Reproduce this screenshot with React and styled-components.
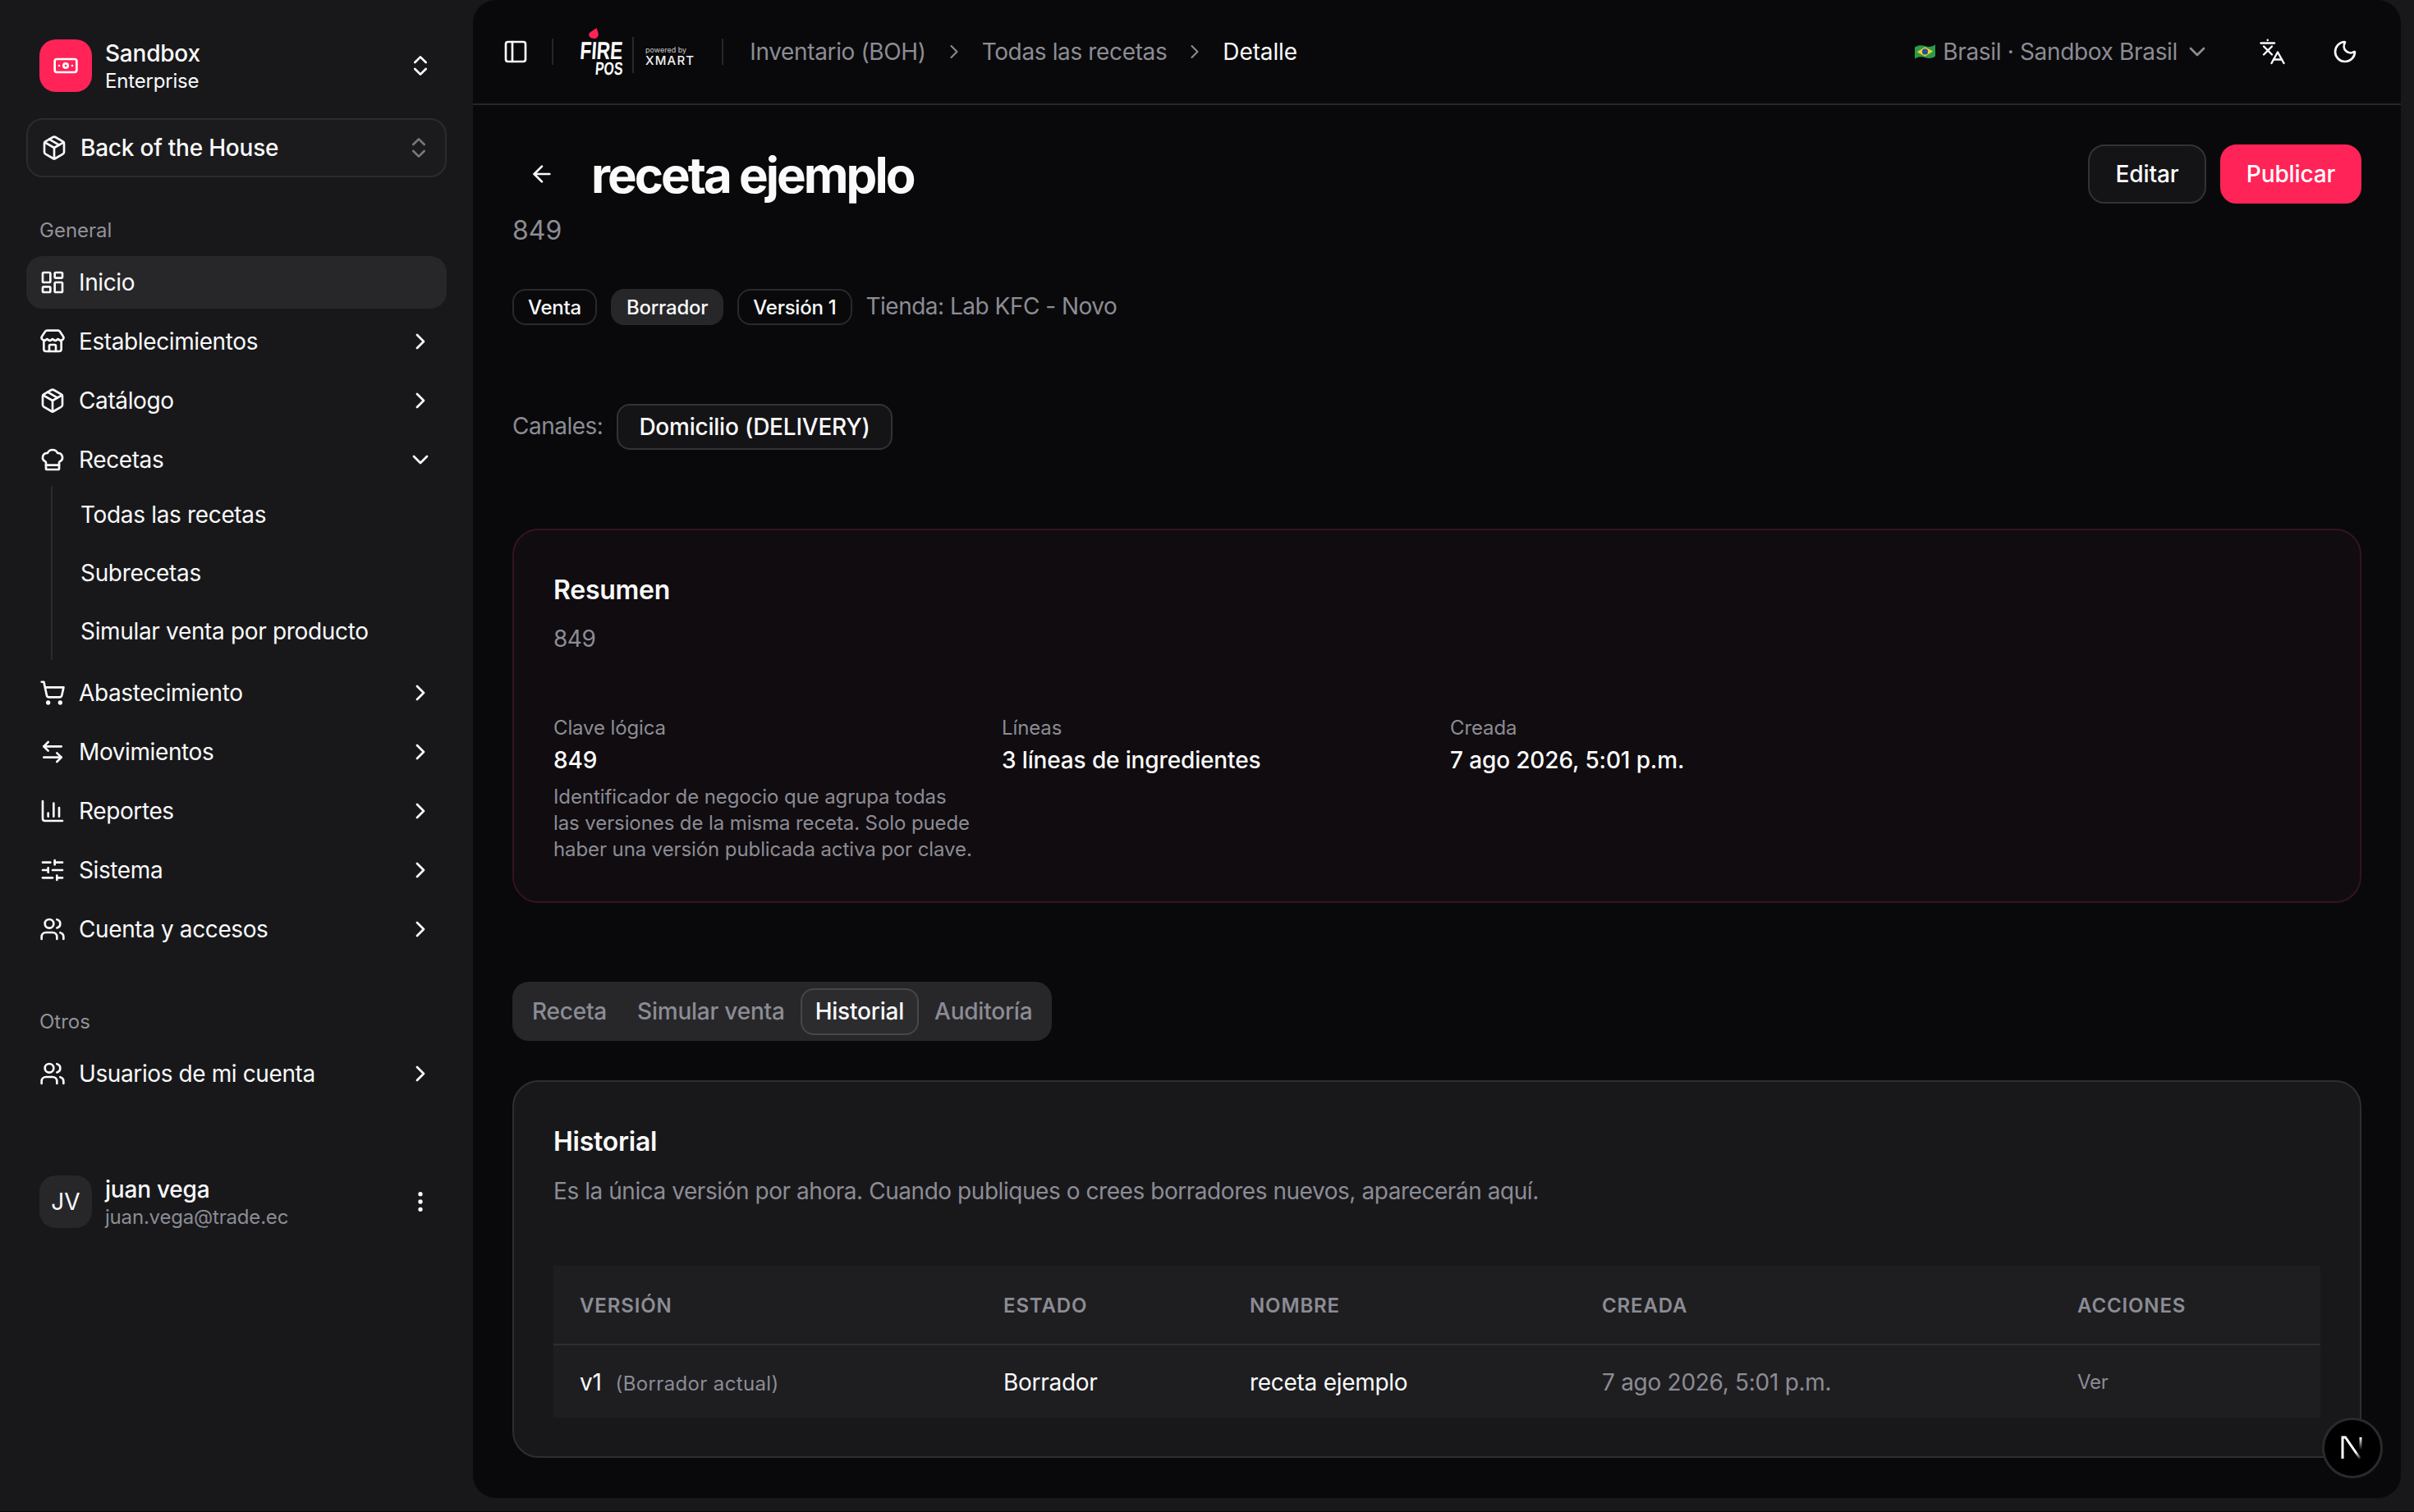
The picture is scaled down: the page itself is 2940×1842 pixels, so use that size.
import React from 'react';
import styled, { createGlobalStyle } from 'styled-components';
import {
  ArrowLeft,
  ArrowLeftRight,
  Banknote,
  ChartColumn,
  ChefHat,
  ChevronDown,
  ChevronRight,
  ChevronsUpDown,
  EllipsisVertical,
  LayoutDashboard,
  Moon,
  Package,
  PanelLeft,
  ShoppingCart,
  SlidersHorizontal,
  Store,
  Users,
} from 'lucide-react';

const GlobalStyle = createGlobalStyle`
  html, body {
    margin: 0;
    padding: 0;
    background: #18181b;
  }
  body {
    font-family: Inter, "Liberation Sans", sans-serif;
    color: #fafafa;
  }
  * {
    box-sizing: border-box;
  }
`;

const Page = styled.div`
  position: relative;
  display: flex;
  align-items: flex-start;
  width: 2940px;
  height: 1842px;
  overflow: hidden;
  border-bottom: 1px solid #09090b;
  background: #18181b;
`;

const Sidebar = styled.aside`
  display: flex;
  flex-direction: column;
  flex: none;
  width: 576px;
  padding: 48px 32px 0;
`;

const AccountRow = styled.div`
  display: flex;
  align-items: center;
  gap: 16px;
  height: 64px;
  padding: 0 16px;
  margin-bottom: ${(props) => props.$mb || 0}px;
`;

const LogoTile = styled.div`
  display: flex;
  align-items: center;
  justify-content: center;
  flex: none;
  width: 64px;
  height: 64px;
  border-radius: 20px;
  background: #ff2358;
  color: #fff;
`;

const AvatarTile = styled(LogoTile)`
  background: #27272a;
  font-size: 28px;
  color: #fafafa;
`;

const AccountText = styled.div`
  display: flex;
  flex-direction: column;
  flex: 1;
  padding-top: 4px;
`;

const AccountName = styled.div`
  font-size: 28px;
  font-weight: 500;
  line-height: 34px;
  letter-spacing: -0.008em;
`;

const AccountSub = styled.div`
  font-size: 24px;
  line-height: 34px;
  letter-spacing: -0.008em;
  color: ${(props) => props.$color || '#fafafa'};
`;

const ModuleSelect = styled.div`
  display: flex;
  align-items: center;
  gap: 16px;
  height: 72px;
  padding: 0 16px;
  border: 2px solid #2c2c2f;
  border-radius: 20px;
  background: #1b1b1e;
  font-size: 28px;
  font-weight: 500;
  letter-spacing: -0.008em;
`;

const MutedIcon = styled.span`
  display: flex;
  margin-left: auto;
  color: #77777d;
`;

const GroupLabel = styled.div`
  display: flex;
  align-items: center;
  height: 64px;
  margin-top: ${(props) => props.$mt}px;
  padding-left: 16px;
  font-size: 24px;
  color: #929297;
`;

const Menu = styled.nav`
  display: flex;
  flex-direction: column;
  gap: 8px;
`;

const MenuItem = styled.div`
  display: flex;
  align-items: center;
  gap: 16px;
  height: 64px;
  padding: 0 16px;
  border-radius: 20px;
  font-size: 28px;
  letter-spacing: -0.014em;
  background: ${(props) => (props.$active ? '#27272a' : 'transparent')};
  svg:last-child:not(:first-child) {
    margin-left: auto;
  }
`;

const MenuGroup = styled.div`
  display: flex;
  flex-direction: column;
`;

const SubMenu = styled.div`
  display: flex;
  flex-direction: column;
  gap: 1px;
  margin-left: 30px;
  padding-left: 34px;
  border-left: 2px solid #2b2b2e;
`;

const SubItem = styled.div`
  display: flex;
  align-items: center;
  height: 70px;
  font-size: 28px;
  letter-spacing: -0.012em;
`;

const UserBlock = styled.div`
  margin-top: 92px;
`;

const Main = styled.main`
  display: flex;
  flex-direction: column;
  flex: none;
  width: 2348px;
  height: 1825px;
  border-radius: 28px;
  background: #09090b;
`;

const Topbar = styled.header`
  display: flex;
  align-items: center;
  flex: none;
  height: 128px;
  padding: 0 52px 0 36px;
  border-bottom: 2px solid #262629;
`;

const TopSep = styled.div`
  flex: none;
  width: 2px;
  height: 32px;
  margin: ${(props) => props.$margin};
  background: #262629;
`;

const Brand = styled.div`
  display: flex;
  align-items: center;
  height: 60px;
`;

const FireMark = styled.div`
  position: relative;
  display: flex;
  flex-direction: column;
  align-items: flex-end;
  width: 53px;
  height: 44px;
  margin-top: 20px;
  font-family: "Liberation Sans", sans-serif;
  font-weight: 700;
  color: #fff;
`;

const Flame = styled.svg`
  position: absolute;
  left: 12px;
  top: -17px;
`;

const FireWord = styled.div`
  height: 22px;
  font-size: 30px;
  line-height: 22px;
  transform: skewX(-4deg) scaleX(0.76);
  transform-origin: right center;
`;

const PosWord = styled.div`
  height: 18px;
  margin-top: 2px;
  font-size: 22px;
  line-height: 18px;
  transform: skewX(-4deg) scaleX(0.72);
  transform-origin: right center;
`;

const BrandSep = styled.div`
  width: 2px;
  height: 44px;
  margin: 8px 14px 0 12px;
  background: #2a2a2d;
`;

const PoweredBy = styled.div`
  display: flex;
  flex-direction: column;
  margin-top: 10px;
`;

const PoweredText = styled.div`
  font-size: 9px;
  line-height: 11px;
  color: #c6c6c9;
`;

const XmartText = styled.div`
  font-size: 15px;
  font-weight: 500;
  line-height: 16px;
  letter-spacing: 0.08em;
  color: #f2f2f2;
`;

const Crumbs = styled.div`
  display: flex;
  align-items: center;
  font-size: 28px;
  letter-spacing: -0.013em;
  color: #8c8c94;
`;

const CrumbSep = styled.span`
  display: flex;
  margin: 0 20px;
  color: #8c8c94;
`;

const CrumbCurrent = styled.span`
  letter-spacing: -0.004em;
  color: #fafafa;
`;

const CountryPick = styled.div`
  display: flex;
  align-items: center;
  margin-left: auto;
  font-size: 28px;
  letter-spacing: -0.012em;
  color: #8c8c94;
  svg:first-child {
    margin-right: 9px;
  }
  svg:last-child {
    margin-left: 8px;
  }
`;

const TopIcons = styled.div`
  display: flex;
  align-items: center;
  gap: 56px;
  margin-left: 60px;
`;

const Content = styled.div`
  display: flex;
  flex-direction: column;
  padding: 48px 48px 0;
`;

const TitleRow = styled.div`
  display: flex;
  align-items: center;
  height: 72px;
`;

const BackButton = styled.div`
  display: flex;
  align-items: center;
  justify-content: center;
  width: 72px;
  margin-right: 24px;
`;

const Title = styled.h1`
  margin: 0;
  padding-top: 2px;
  font-size: 60px;
  font-weight: 700;
  line-height: 72px;
  letter-spacing: -0.05em;
`;

const Actions = styled.div`
  display: flex;
  gap: 17px;
  margin-left: auto;
`;

const Button = styled.div`
  display: flex;
  align-items: center;
  justify-content: center;
  height: 72px;
  width: ${(props) => props.$width}px;
  border-radius: 20px;
  font-size: 28px;
  font-weight: 500;
  letter-spacing: -0.005em;
  color: #fff;
  background: ${(props) => (props.$primary ? '#ff2358' : '#141416')};
  border: 2px solid ${(props) => (props.$primary ? '#ff2358' : '#333336')};
`;

const SubTitle = styled.div`
  margin-top: 9px;
  font-size: 32px;
  line-height: 48px;
  color: #8c8c94;
`;

const BadgeRow = styled.div`
  display: flex;
  align-items: center;
  gap: 17px;
  margin-top: 47px;
`;

const Badge = styled.div`
  display: flex;
  align-items: center;
  height: 44px;
  padding: 0 17px;
  border-radius: 16px;
  font-size: 24px;
  font-weight: 500;
  letter-spacing: -0.01em;
  border: 2px solid ${(props) => (props.$filled ? '#27272a' : '#29292c')};
  background: ${(props) => (props.$filled ? '#27272a' : 'transparent')};
`;

const MutedText = styled.span`
  padding-bottom: 2px;
  font-size: 28px;
  letter-spacing: -0.018em;
  color: #8c8c94;
`;

const ChannelRow = styled.div`
  display: flex;
  align-items: center;
  gap: 17px;
  margin-top: 96px;
`;

const ChannelChip = styled.div`
  display: flex;
  align-items: center;
  height: 56px;
  padding: 0 25px;
  border: 2px solid #333336;
  border-radius: 16px;
  background: #141416;
  font-size: 28px;
  font-weight: 500;
  letter-spacing: -0.008em;
`;

const Card = styled.section`
  padding: 49px 48px 47px;
  margin-top: ${(props) => props.$mt}px;
  border-radius: 32px;
  border: 2px solid ${(props) => (props.$tinted ? '#35141f' : '#2e2e31')};
  background: ${(props) => (props.$tinted ? '#100c10' : '#18181b')};
`;

const CardTitle = styled.h2`
  margin: 0;
  font-size: 32px;
  font-weight: 600;
  line-height: 48px;
  letter-spacing: -0.008em;
`;

const CardNote = styled.div`
  margin-top: ${(props) => props.$mt}px;
  font-size: 28px;
  line-height: 40px;
  letter-spacing: -0.016em;
  color: #8c8c94;
`;

const FactGrid = styled.div`
  display: grid;
  grid-template-columns: repeat(4, 1fr);
  gap: 32px;
  margin-top: 73px;
`;

const FactLabel = styled.div`
  font-size: 24px;
  line-height: 32px;
  letter-spacing: -0.005em;
  color: #8c8c94;
`;

const FactValue = styled.div`
  margin-top: 3px;
  font-size: 28px;
  font-weight: 500;
  line-height: 40px;
  letter-spacing: -0.005em;
`;

const FactHint = styled.div`
  max-width: 512px;
  margin-top: 9px;
  font-size: 24px;
  line-height: 32px;
  letter-spacing: -0.004em;
  color: #8c8c94;
`;

const Tabs = styled.div`
  display: flex;
  align-items: center;
  gap: 1px;
  align-self: flex-start;
  height: 72px;
  margin-top: 96px;
  padding: 0 6px;
  border-radius: 20px;
  background: #27272a;
`;

const Tab = styled.div`
  display: flex;
  align-items: center;
  height: 57px;
  padding: 0 16px;
  border-radius: 16px;
  font-size: 28px;
  font-weight: 500;
  letter-spacing: -0.008em;
  color: ${(props) => (props.$active ? '#fafafa' : '#8c8c94')};
  border: 2px solid ${(props) => (props.$active ? '#47474b' : 'transparent')};
  background: ${(props) => (props.$active ? '#2c2c2f' : 'transparent')};
`;

const Table = styled.table`
  width: 2152px;
  margin-top: 71px;
  table-layout: fixed;
  border-collapse: collapse;
  background: #1e1e21;
`;

const Th = styled.th`
  width: ${(props) => props.$width}px;
  height: 96px;
  padding: 2px 32px 0;
  border-bottom: 2px solid #2e2e31;
  font-size: 24px;
  font-weight: 600;
  letter-spacing: 0.036em;
  text-align: left;
  color: #8c8c94;
`;

const Td = styled.td`
  height: 89px;
  padding: 1px 32px 0;
  font-size: ${(props) => (props.$small ? 24 : 28)}px;
  letter-spacing: -0.01em;
  color: ${(props) => (props.$muted ? '#8c8c94' : '#fafafa')};
`;

const RowNote = styled.span`
  margin-left: 17px;
  font-size: 24px;
  letter-spacing: 0.015em;
  color: #8c8c94;
`;

const DevBadge = styled.div`
  position: absolute;
  right: 38px;
  bottom: 40px;
  display: flex;
  align-items: center;
  justify-content: center;
  width: 74px;
  height: 74px;
  border: 3px solid #2a2a2c;
  border-radius: 50%;
  background: #000;
`;

const menuIcon = { size: 32, strokeWidth: 2 };

const mainMenu = [
  { label: 'Establecimientos', Icon: Store },
  { label: 'Catálogo', Icon: Package },
];

const afterRecipes = [
  { label: 'Abastecimiento', Icon: ShoppingCart },
  { label: 'Movimientos', Icon: ArrowLeftRight },
  { label: 'Reportes', Icon: ChartColumn },
  { label: 'Sistema', Icon: SlidersHorizontal },
  { label: 'Cuenta y accesos', Icon: Users },
];

const NavRow = ({ label, Icon }) => (
  <MenuItem>
    <Icon {...menuIcon} />
    {label}
    <ChevronRight {...menuIcon} />
  </MenuItem>
);

const TranslateIcon = () => (
  <svg width="32" height="32" viewBox="0 0 32 32" fill="none" stroke="#fafafa" strokeWidth="2.4" strokeLinecap="round" strokeLinejoin="round">
    <path d="M1.5 5.5h16.5" />
    <path d="M9.7 1.800v.2" />
    <path d="M5 9.500l10 10M15 9.500l-10 10" />
    <path d="M14.500 30L22 16.500 29.500 30" />
    <path d="M17 25.500h10" />
  </svg>
);

const BrazilFlag = () => (
  <svg width="25" height="18" viewBox="0 0 25 18">
    <path d="M0 3.500C5 .5 9 1 13 2.200c4 1.200 8 1 12-2v14.300c-4 2.800-8 3-12 1.800C9 15 5 14.600 0 17.500z" fill="#2a9a4b" />
    <path d="M2.800 9.200L12.500 3.200l9.600 5.300-9.600 6.200z" fill="#f7cf2e" />
    <circle cx="12.500" cy="8.900" r="3.600" fill="#2c4f9c" />
  </svg>
);

const NextMark = () => (
  <svg width="36" height="36" viewBox="0 0 36 36" fill="none">
    <defs>
      <linearGradient id="nextDiag" x1="14" y1="12" x2="28" y2="32" gradientUnits="userSpaceOnUse">
        <stop offset="0.55" stopColor="#fff" />
        <stop offset="1" stopColor="#fff" stopOpacity="0" />
      </linearGradient>
      <linearGradient id="nextStem" x1="26" y1="5" x2="26" y2="20" gradientUnits="userSpaceOnUse">
        <stop offset="0" stopColor="#fff" />
        <stop offset="1" stopColor="#fff" stopOpacity="0" />
      </linearGradient>
    </defs>
    <path d="M6 31V5h3.400l18 26" stroke="url(#nextDiag)" strokeWidth="3" />
    <path d="M28 5v20" stroke="url(#nextStem)" strokeWidth="3" />
  </svg>
);

export default function App() {
  return (
    <Page>
      <GlobalStyle />
      <Sidebar>
        <AccountRow $mb={32}>
          <LogoTile>
            <Banknote size={32} strokeWidth={2} />
          </LogoTile>
          <AccountText>
            <AccountName>Sandbox</AccountName>
            <AccountSub>Enterprise</AccountSub>
          </AccountText>
          <ChevronsUpDown {...menuIcon} />
        </AccountRow>
        <ModuleSelect>
          <Package {...menuIcon} />
          Back of the House
          <MutedIcon>
            <ChevronsUpDown {...menuIcon} />
          </MutedIcon>
        </ModuleSelect>

        <GroupLabel $mt={32}>General</GroupLabel>
        <Menu>
          <MenuItem $active>
            <LayoutDashboard {...menuIcon} />
            Inicio
          </MenuItem>
          {mainMenu.map((item) => (
            <NavRow key={item.label} {...item} />
          ))}
          <MenuGroup>
            <MenuItem>
              <ChefHat {...menuIcon} />
              Recetas
              <ChevronDown {...menuIcon} />
            </MenuItem>
            <SubMenu>
              <SubItem>Todas las recetas</SubItem>
              <SubItem>Subrecetas</SubItem>
              <SubItem>Simular venta por producto</SubItem>
            </SubMenu>
          </MenuGroup>
          {afterRecipes.map((item) => (
            <NavRow key={item.label} {...item} />
          ))}
        </Menu>

        <GroupLabel $mt={48}>Otros</GroupLabel>
        <Menu>
          <NavRow label="Usuarios de mi cuenta" Icon={Users} />
        </Menu>

        <UserBlock>
          <AccountRow>
            <AvatarTile>JV</AvatarTile>
            <AccountText>
              <AccountName>juan vega</AccountName>
              <AccountSub $color="#8c8c94">juan.vega@trade.ec</AccountSub>
            </AccountText>
            <EllipsisVertical {...menuIcon} />
          </AccountRow>
        </UserBlock>
      </Sidebar>

      <Main>
        <Topbar>
          <PanelLeft {...menuIcon} />
          <TopSep $margin="0 31px 0 28px" />
          <Brand>
            <FireMark>
              <Flame width="12" height="13" viewBox="0 0 12 13">
                <path d="M9.500 0C9.800 2.500 12 4.500 11.800 8c-.2 3-2.400 5-5.600 5C2.600 13 .3 10.800.3 8.300.3 5.500 2.500 5 4.500 3.500 6.300 2.200 8 1.500 9.500 0z" fill="#ff2358" />
              </Flame>
              <FireWord>FIRE</FireWord>
              <PosWord>POS</PosWord>
            </FireMark>
            <BrandSep />
            <PoweredBy>
              <PoweredText>powered by</PoweredText>
              <XmartText>XMART</XmartText>
            </PoweredBy>
          </Brand>
          <TopSep $margin="0 32px 0 33px" />
          <Crumbs>
            Inventario (BOH)
            <CrumbSep>
              <ChevronRight size={28} strokeWidth={1.8} />
            </CrumbSep>
            Todas las recetas
            <CrumbSep>
              <ChevronRight size={28} strokeWidth={1.8} />
            </CrumbSep>
            <CrumbCurrent>Detalle</CrumbCurrent>
          </Crumbs>
          <CountryPick>
            <BrazilFlag />
            Brasil · Sandbox Brasil
            <ChevronDown {...menuIcon} />
          </CountryPick>
          <TopIcons>
            <TranslateIcon />
            <Moon {...menuIcon} />
          </TopIcons>
        </Topbar>

        <Content>
          <TitleRow>
            <BackButton>
              <ArrowLeft {...menuIcon} />
            </BackButton>
            <Title>receta ejemplo</Title>
            <Actions>
              <Button $width={144}>Editar</Button>
              <Button $width={172} $primary>
                Publicar
              </Button>
            </Actions>
          </TitleRow>
          <SubTitle>849</SubTitle>

          <BadgeRow>
            <Badge>Venta</Badge>
            <Badge $filled>Borrador</Badge>
            <Badge>Versión 1</Badge>
            <MutedText>Tienda: Lab KFC - Novo</MutedText>
          </BadgeRow>

          <ChannelRow>
            <MutedText>Canales:</MutedText>
            <ChannelChip>Domicilio (DELIVERY)</ChannelChip>
          </ChannelRow>

          <Card $tinted $mt={96}>
            <CardTitle>Resumen</CardTitle>
            <CardNote $mt={15}>849</CardNote>
            <FactGrid>
              <div>
                <FactLabel>Clave lógica</FactLabel>
                <FactValue>849</FactValue>
                <FactHint>
                  Identificador de negocio que agrupa todas las versiones de la misma receta. Solo puede haber una versión publicada activa por clave.
                </FactHint>
              </div>
              <div>
                <FactLabel>Líneas</FactLabel>
                <FactValue>3 líneas de ingredientes</FactValue>
              </div>
              <div>
                <FactLabel>Creada</FactLabel>
                <FactValue>7 ago 2026, 5:01 p.m.</FactValue>
              </div>
            </FactGrid>
          </Card>

          <Tabs>
            <Tab>Receta</Tab>
            <Tab>Simular venta</Tab>
            <Tab $active>Historial</Tab>
            <Tab>Auditoría</Tab>
          </Tabs>

          <Card $mt={48}>
            <CardTitle>Historial</CardTitle>
            <CardNote $mt={16}>
              Es la única versión por ahora. Cuando publiques o crees borradores nuevos, aparecerán aquí.
            </CardNote>
            <Table>
              <thead>
                <tr>
                  <Th $width={516}>VERSIÓN</Th>
                  <Th $width={300}>ESTADO</Th>
                  <Th $width={429}>NOMBRE</Th>
                  <Th $width={579}>CREADA</Th>
                  <Th $width={328}>ACCIONES</Th>
                </tr>
              </thead>
              <tbody>
                <tr>
                  <Td>
                    v1<RowNote>(Borrador actual)</RowNote>
                  </Td>
                  <Td>Borrador</Td>
                  <Td>receta ejemplo</Td>
                  <Td $muted>7 ago 2026, 5:01 p.m.</Td>
                  <Td $muted $small>
                    Ver
                  </Td>
                </tr>
              </tbody>
            </Table>
          </Card>
        </Content>
      </Main>
      <DevBadge>
        <NextMark />
      </DevBadge>
    </Page>
  );
}
